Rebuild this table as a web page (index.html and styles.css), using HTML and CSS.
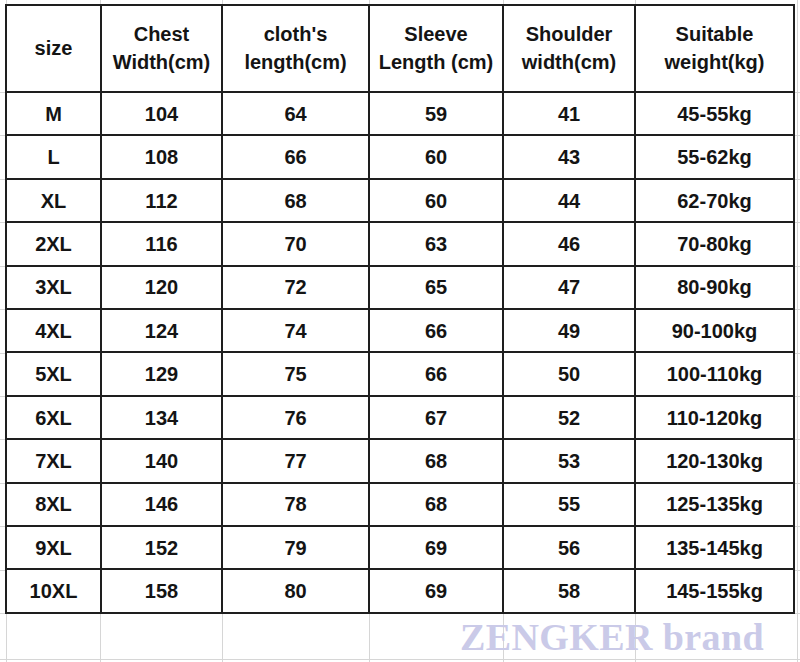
FILE: index.html
```html
<!DOCTYPE html>
<html>
<head>
<meta charset="utf-8">
<link rel="stylesheet" href="styles.css">
</head>
<body>
<div class="sheet">
  <table class="size-table">
    <colgroup>
      <col class="c1"><col class="c2"><col class="c3"><col class="c4"><col class="c5"><col class="c6">
    </colgroup>
    <thead>
      <tr>
        <th>size</th>
        <th>Chest<br>Width(cm)</th>
        <th>cloth's<br>length(cm)</th>
        <th>Sleeve<br>Length (cm)</th>
        <th>Shoulder<br>width(cm)</th>
        <th>Suitable<br>weight(kg)</th>
      </tr>
    </thead>
    <tbody>
      <tr><td>M</td><td>104</td><td>64</td><td>59</td><td>41</td><td>45-55kg</td></tr>
      <tr><td>L</td><td>108</td><td>66</td><td>60</td><td>43</td><td>55-62kg</td></tr>
      <tr><td>XL</td><td>112</td><td>68</td><td>60</td><td>44</td><td>62-70kg</td></tr>
      <tr><td>2XL</td><td>116</td><td>70</td><td>63</td><td>46</td><td>70-80kg</td></tr>
      <tr><td>3XL</td><td>120</td><td>72</td><td>65</td><td>47</td><td>80-90kg</td></tr>
      <tr><td>4XL</td><td>124</td><td>74</td><td>66</td><td>49</td><td>90-100kg</td></tr>
      <tr><td>5XL</td><td>129</td><td>75</td><td>66</td><td>50</td><td>100-110kg</td></tr>
      <tr><td>6XL</td><td>134</td><td>76</td><td>67</td><td>52</td><td>110-120kg</td></tr>
      <tr><td>7XL</td><td>140</td><td>77</td><td>68</td><td>53</td><td>120-130kg</td></tr>
      <tr><td>8XL</td><td>146</td><td>78</td><td>68</td><td>55</td><td>125-135kg</td></tr>
      <tr><td>9XL</td><td>152</td><td>79</td><td>69</td><td>56</td><td>135-145kg</td></tr>
      <tr><td>10XL</td><td>158</td><td>80</td><td>69</td><td>58</td><td>145-155kg</td></tr>
    </tbody>
  </table>
  <div class="brand">ZENGKER brand</div>
</div>
</body>
</html>
```

FILE: styles.css
```css
html, body {
  margin: 0;
  padding: 0;
}

body {
  width: 800px;
  height: 662px;
  overflow: hidden;
  background-color: #ffffff;
  font-family: "Liberation Sans", Arial, sans-serif;
}

/* spreadsheet gridlines behind the table */
.sheet {
  width: 800px;
  height: 662px;
  box-sizing: border-box;
  padding: 4px 0 0 5px;
  background-image:
    linear-gradient(#d6d6d6, #d6d6d6),
    linear-gradient(#d6d6d6, #d6d6d6),
    linear-gradient(#d6d6d6, #d6d6d6),
    linear-gradient(#d6d6d6, #d6d6d6),
    linear-gradient(#d6d6d6, #d6d6d6),
    linear-gradient(#d6d6d6, #d6d6d6),
    linear-gradient(#d6d6d6, #d6d6d6),
    linear-gradient(#d6d6d6, #d6d6d6),
    repeating-linear-gradient(to bottom, #d6d6d6 0, #d6d6d6 1px, transparent 1px, transparent 43.42px);
  background-size:
    1px 662px, 1px 662px, 1px 662px, 1px 662px, 1px 662px, 1px 662px, 1px 662px,
    800px 1px,
    800px 522px;
  background-position:
    6px 0, 100px 0, 222px 0, 369px 0, 503px 0, 635px 0, 797px 0,
    0 659px,
    0 92px;
  background-repeat: no-repeat;
}

.size-table {
  border-collapse: collapse;
  table-layout: fixed;
  width: 789px;
  background: #ffffff;
  color: #141414;
  font-size: 20px;
  font-weight: bold;
  border: 2px solid #1e1e1e;
}

.c1 { width: 95px; }
.c2 { width: 121px; }
.c3 { width: 147px; }
.c4 { width: 134px; }
.c5 { width: 132px; }
.c6 { width: 159px; }

.size-table th,
.size-table td {
  border: 2px solid #1e1e1e;
  padding: 0;
  text-align: center;
  vertical-align: middle;
  font-weight: bold;
}

.size-table thead tr {
  height: 87px;
}

.size-table th {
  line-height: 28px;
  padding-bottom: 2px;
}

.size-table tbody tr {
  height: 43.42px;
}

.size-table td {
  line-height: 22px;
}

.brand {
  margin: 4px 0 0 455px;
  font-family: "Liberation Serif", "Times New Roman", serif;
  font-weight: bold;
  font-size: 38px;
  line-height: 38px;
  letter-spacing: 0.4px;
  color: #cacae8;
}
```
